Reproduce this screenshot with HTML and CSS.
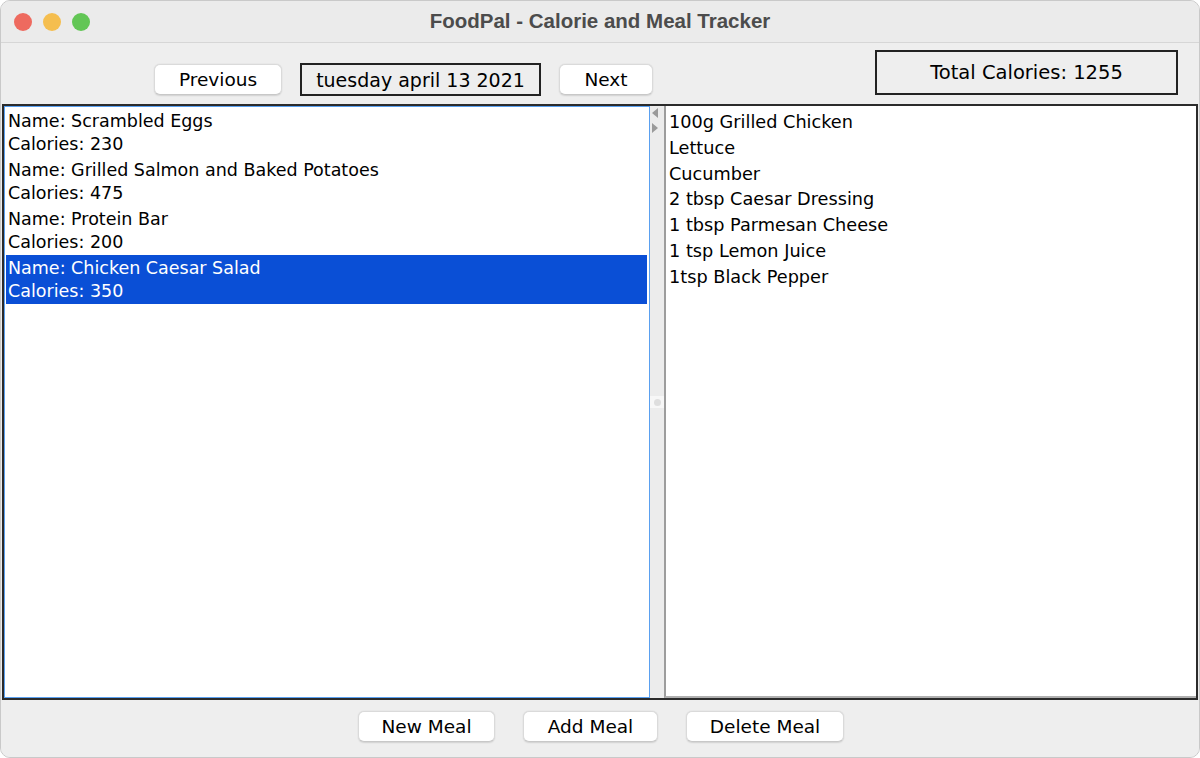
FILE: index.html
```html
<!DOCTYPE html>
<html>
<head>
<meta charset="utf-8">
<link rel="stylesheet" href="styles.css">
</head>
<body>
<div class="window">
  <div class="titlebar">
    <div class="lights">
      <span class="light red"></span>
      <span class="light yellow"></span>
      <span class="light green"></span>
    </div>
    <div class="title">FoodPal - Calorie and Meal Tracker</div>
  </div>
  <div class="toolbar">
    <div class="nav">
      <button class="btn btn-prev">Previous</button>
      <div class="datebox">tuesday april 13 2021</div>
      <button class="btn btn-next">Next</button>
    </div>
    <div class="total">Total Calories: 1255</div>
  </div>
  <div class="split">
    <div class="meals">
      <div class="meal"><div>Name: Scrambled Eggs</div><div>Calories: 230</div></div>
      <div class="meal"><div>Name: Grilled Salmon and Baked Potatoes</div><div>Calories: 475</div></div>
      <div class="meal"><div>Name: Protein Bar</div><div>Calories: 200</div></div>
      <div class="meal selected"><div>Name: Chicken Caesar Salad</div><div>Calories: 350</div></div>
    </div>
    <div class="divider">
      <div class="arrows">
        <svg width="8" height="10" viewBox="0 0 8 10"><path d="M7 0 L1 5 L7 10 Z" fill="#9a9a9a"/></svg>
        <svg width="8" height="10" viewBox="0 0 8 10"><path d="M1 0 L7 5 L1 10 Z" fill="#9a9a9a"/></svg>
      </div>
      <div class="grip"><span></span></div>
    </div>
    <div class="ingredients">
      <div>100g Grilled Chicken</div>
      <div>Lettuce</div>
      <div>Cucumber</div>
      <div>2 tbsp Caesar Dressing</div>
      <div>1 tbsp Parmesan Cheese</div>
      <div>1 tsp Lemon Juice</div>
      <div>1tsp Black Pepper</div>
    </div>
  </div>
  <div class="bottombar">
    <button class="btn btn-new">New Meal</button>
    <button class="btn btn-add">Add Meal</button>
    <button class="btn btn-del">Delete Meal</button>
  </div>
</div>
</body>
</html>
```

FILE: styles.css
```css
html, body {
  margin: 0;
  padding: 0;
  width: 1200px;
  height: 758px;
  overflow: hidden;
  background: #ffffff;
}

.window {
  width: 1200px;
  height: 758px;
  box-sizing: border-box;
  background: #ececec;
  border-radius: 10px;
  border: 1px solid #c9c9c9;
  overflow: hidden;
  display: flex;
  flex-direction: column;
  font-family: "DejaVu Sans", "Liberation Sans", sans-serif;
  color: #000;
}

.titlebar {
  height: 41px;
  flex: none;
  display: flex;
  align-items: center;
  justify-content: center;
  position: relative;
  background: #ebebeb;
  border-bottom: 1px solid #d6d6d6;
}

.lights {
  position: absolute;
  left: 13px;
  top: 12px;
  display: flex;
  gap: 11px;
}

.light {
  width: 18px;
  height: 18px;
  border-radius: 50%;
  display: block;
}
.red { background: #ee6a5f; }
.yellow { background: #f5be4f; }
.green { background: #62c655; }

.title {
  font-family: "Liberation Sans", "Helvetica", sans-serif;
  font-weight: bold;
  font-size: 20.5px;
  color: #4c4c4c;
  margin-top: -1px;
}

.toolbar {
  height: 61px;
  flex: none;
  display: flex;
  align-items: flex-start;
  background: #eeeeee;
  position: relative;
}

.nav {
  display: flex;
  align-items: center;
  margin-left: 153px;
  margin-top: 20px;
  gap: 0;
}

.btn {
  font-family: "DejaVu Sans", "Liberation Sans", sans-serif;
  font-size: 18.5px;
  color: #000;
  background: #ffffff;
  border: 1px solid #dadada;
  border-bottom-color: #c8c8c8;
  border-radius: 6px;
  box-shadow: 0 0.5px 1.5px rgba(0,0,0,0.12);
  height: 31px;
  padding: 0;
  display: flex;
  align-items: center;
  justify-content: center;
}

.btn-prev { width: 128px; }
.btn-next { width: 94px; margin-left: 18px; }

.datebox {
  width: 237px;
  height: 29px;
  margin-left: 18px;
  border: 2px solid #222;
  display: flex;
  align-items: center;
  justify-content: center;
  font-size: 19px;
}

.total {
  margin-left: auto;
  margin-right: 21px;
  margin-top: 7px;
  width: 299px;
  height: 41px;
  border: 2px solid #222;
  display: flex;
  align-items: center;
  justify-content: center;
  font-size: 19.5px;
}

.split {
  flex: none;
  height: 592px;
  margin: 0 1px 0 1px;
  border: 2px solid #2b2b2b;
  display: flex;
  background: #ececec;
}

.meals {
  width: 646px;
  flex: none;
  background: #fff;
  border: 1px solid #5aa0f0;
  box-sizing: border-box;
  height: 592px;
  padding: 1px 2px 0 1px;
}

.meal {
  height: 49px;
  box-sizing: border-box;
  padding: 2px 0 0 2px;
  font-size: 17.5px;
  line-height: 23px;
}

.meal.selected {
  background: #0a4fd6;
  color: #fff;
}

.divider {
  width: 14px;
  flex: none;
  background: #ececec;
  display: flex;
  flex-direction: column;
  align-items: center;
  position: relative;
}

.arrows {
  display: flex;
  flex-direction: column;
  gap: 5px;
  margin-top: 2px;
  margin-left: -4px;
}

.arrows svg { display: block; }

.grip {
  position: absolute;
  top: 290px;
  left: 0;
  width: 14px;
  height: 12px;
  background: #f7f7f7;
  display: flex;
  align-items: center;
  justify-content: center;
}
.grip span {
  width: 7px;
  height: 7px;
  border-radius: 50%;
  background: #dedede;
}

.ingredients {
  flex: 1;
  background: #fff;
  border-left: 2px solid #9d9d9d;
  border-bottom: 2px solid #b0b0b0;
  box-sizing: border-box;
  padding: 4px 0 0 3px;
  font-size: 17.7px;
  line-height: 25.8px;
}

.bottombar {
  flex: 1;
  background: #eeeeee;
  display: flex;
  justify-content: center;
  align-items: flex-start;
  padding-top: 11px;
  gap: 28px;
  padding-left: 2px;
}

.btn-new { width: 137px; }
.btn-add { width: 135px; }
.btn-del { width: 158px; }
```
